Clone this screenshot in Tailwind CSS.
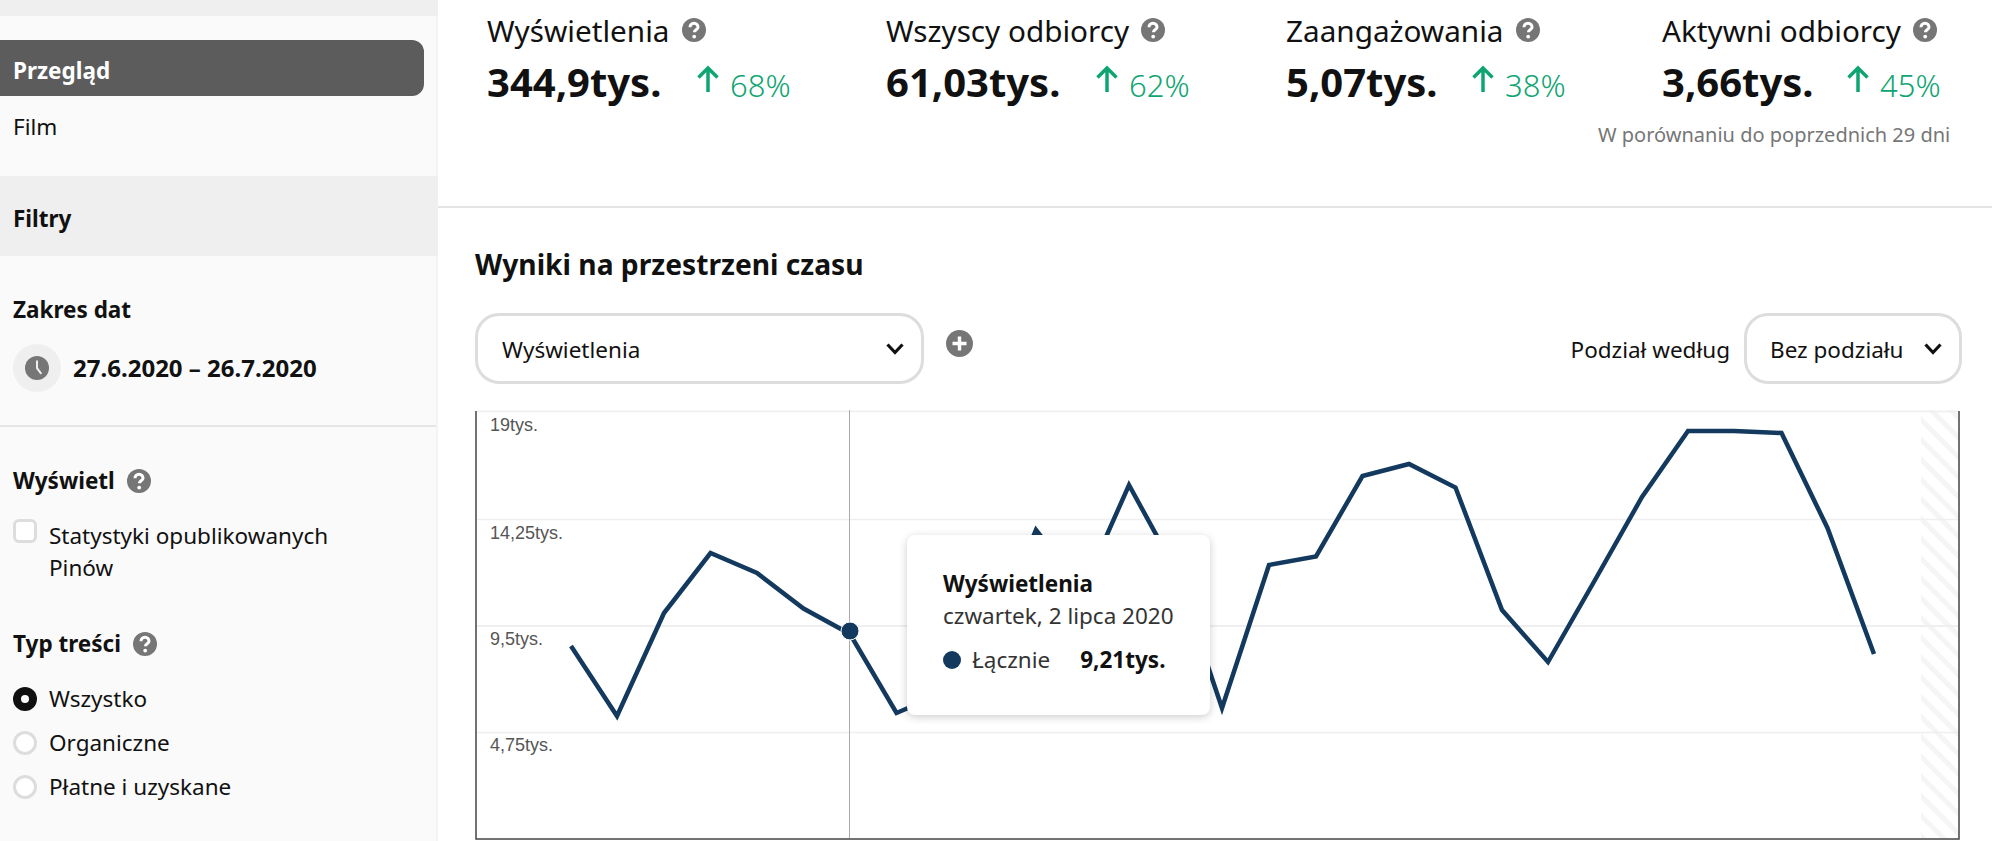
<!DOCTYPE html>
<html lang="pl">
  <head>
    <meta charset="UTF-8" />
    <title>Analityka</title>
    <script src="https://cdn.jsdelivr.net/npm/@tailwindcss/browser@4"></script>
  </head>
  <body class="bg-white text-[#111] font-['Noto_Sans',sans-serif] h-[841px] overflow-hidden">
    <div class="flex h-[841px]">
      <!-- sidebar -->
      <aside class="w-[438px] shrink-0 h-full bg-[#fafafa] border-r-2 border-[#f4f4f4] text-[22.5px]">
        <div class="h-4 bg-[#efefef] -mr-[2px]"></div>
        <div class="mt-6 mr-3 h-14 bg-[#5c5c5c] rounded-r-xl flex items-center pl-[13px] pt-[5px] text-white font-bold">Przegląd</div>
        <div class="h-14 flex items-center pl-[13px] pt-[5px]">Film</div>
        <div class="mt-6 h-20 bg-[#efefef] -mr-[2px] flex items-center pl-[13px] pt-[5px] font-bold">Filtry</div>
        <div class="mt-[36px] h-9 flex items-center pl-[13px] font-bold">Zakres dat</div>
        <div class="mt-[16px] flex items-center pl-[13px] gap-3 font-bold text-[24px]">
          <div class="w-12 h-12 rounded-full bg-[#efefef] flex items-center justify-center">
            <svg width="24" height="24" viewBox="0 0 24 24"><circle cx="12" cy="12" r="12" fill="#767676"/><path d="M11 4.500v8l4.500 6 1.600-1.200-4.100-5.500V4.500z" fill="#efefef"/></svg>
          </div>
          <span>27.6.2020 – 26.7.2020</span>
        </div>
        <div class="mt-[33px] border-t-2 border-[#e6e6e6]"></div>
        <div class="mt-[36px] h-9 flex items-center pl-[13px] gap-3 font-bold">
          Wyświetl
          <svg width="24" height="24" viewBox="0 0 24 24"><circle cx="12" cy="12" r="12" fill="#767676"/><path d="M8 9.200a4 4 0 0 1 8 0c0 2.600-3.600 2.600-3.600 5" fill="none" stroke="#fff" stroke-width="3"/><circle cx="12.200" cy="18.600" r="1.900" fill="#fff"/></svg>
        </div>
        <div class="mt-[20px] flex pl-[13px] gap-3">
          <div class="w-6 h-6 shrink-0 rounded-md border-[3px] border-[#ddd] bg-white"></div>
          <div class="pt-[1px] leading-[32px] w-[320px]">Statystyki opublikowanych Pinów</div>
        </div>
        <div class="mt-[42px] h-9 flex items-center pl-[13px] gap-3 font-bold">
          Typ treści
          <svg width="24" height="24" viewBox="0 0 24 24"><circle cx="12" cy="12" r="12" fill="#767676"/><path d="M8 9.200a4 4 0 0 1 8 0c0 2.600-3.600 2.600-3.600 5" fill="none" stroke="#fff" stroke-width="3"/><circle cx="12.200" cy="18.600" r="1.900" fill="#fff"/></svg>
        </div>
        <div class="mt-[25px] flex flex-col gap-5 pl-[13px]">
          <div class="flex items-center gap-3 h-6">
            <div class="w-6 h-6 rounded-full bg-[#111] flex items-center justify-center"><div class="w-2 h-2 rounded-full bg-white"></div></div>
            <span>Wszystko</span>
          </div>
          <div class="flex items-center gap-3 h-6">
            <div class="w-6 h-6 rounded-full border-[3px] border-[#ddd] bg-white"></div>
            <span>Organiczne</span>
          </div>
          <div class="flex items-center gap-3 h-6">
            <div class="w-6 h-6 rounded-full border-[3px] border-[#ddd] bg-white"></div>
            <span>Płatne i uzyskane</span>
          </div>
        </div>
      </aside>

      <!-- main -->
      <main class="flex-1 min-w-0 relative">
        <div class="h-[208px] pl-[49px] pt-[9px] flex border-b-2 border-[#e4e4e4]">
          <div class="w-[399px]">
            <div class="flex items-center gap-3 text-[29.7px] h-11">Wyświetlenia
              <svg width="24" height="24" viewBox="0 0 24 24" class="-mt-[2px]"><circle cx="12" cy="12" r="12" fill="#767676"/><path d="M8 9.200a4 4 0 0 1 8 0c0 2.600-3.600 2.600-3.600 5" fill="none" stroke="#fff" stroke-width="3"/><circle cx="12.200" cy="18.600" r="1.900" fill="#fff"/></svg>
            </div>
            <div class="flex items-end mt-[4px] h-[50px]">
              <span class="text-[40px] font-bold leading-[50px] w-[209px]">344,9tys.</span>
              <svg width="24" height="28" viewBox="0 0 24 28" class="mb-[14px]"><path d="M12 27V3M2.500 12.500 12 3l9.500 9.500" fill="none" stroke="#0fa573" stroke-width="3.500"/></svg>
              <span class="text-[31px] font-light text-[#0fa573] ml-[10px] leading-[44px]">68%</span>
            </div>
          </div>
          <div class="w-[400px]">
            <div class="flex items-center gap-3 text-[29.7px] h-11">Wszyscy odbiorcy
              <svg width="24" height="24" viewBox="0 0 24 24" class="-mt-[2px]"><circle cx="12" cy="12" r="12" fill="#767676"/><path d="M8 9.200a4 4 0 0 1 8 0c0 2.600-3.600 2.600-3.600 5" fill="none" stroke="#fff" stroke-width="3"/><circle cx="12.200" cy="18.600" r="1.900" fill="#fff"/></svg>
            </div>
            <div class="flex items-end mt-[4px] h-[50px]">
              <span class="text-[40px] font-bold leading-[50px] w-[209px]">61,03tys.</span>
              <svg width="24" height="28" viewBox="0 0 24 28" class="mb-[14px]"><path d="M12 27V3M2.500 12.500 12 3l9.500 9.500" fill="none" stroke="#0fa573" stroke-width="3.500"/></svg>
              <span class="text-[31px] font-light text-[#0fa573] ml-[10px] leading-[44px]">62%</span>
            </div>
          </div>
          <div class="w-[376px]">
            <div class="flex items-center gap-3 text-[29.7px] h-11">Zaangażowania
              <svg width="24" height="24" viewBox="0 0 24 24" class="-mt-[2px]"><circle cx="12" cy="12" r="12" fill="#767676"/><path d="M8 9.200a4 4 0 0 1 8 0c0 2.600-3.600 2.600-3.600 5" fill="none" stroke="#fff" stroke-width="3"/><circle cx="12.200" cy="18.600" r="1.900" fill="#fff"/></svg>
            </div>
            <div class="flex items-end mt-[4px] h-[50px]">
              <span class="text-[40px] font-bold leading-[50px] w-[185px]">5,07tys.</span>
              <svg width="24" height="28" viewBox="0 0 24 28" class="mb-[14px]"><path d="M12 27V3M2.500 12.500 12 3l9.500 9.500" fill="none" stroke="#0fa573" stroke-width="3.500"/></svg>
              <span class="text-[31px] font-light text-[#0fa573] ml-[10px] leading-[44px]">38%</span>
            </div>
          </div>
          <div class="w-[300px]">
            <div class="flex items-center gap-3 text-[29.7px] h-11 whitespace-nowrap">Aktywni odbiorcy
              <svg width="24" height="24" viewBox="0 0 24 24" class="-mt-[2px] shrink-0"><circle cx="12" cy="12" r="12" fill="#767676"/><path d="M8 9.200a4 4 0 0 1 8 0c0 2.600-3.600 2.600-3.600 5" fill="none" stroke="#fff" stroke-width="3"/><circle cx="12.200" cy="18.600" r="1.900" fill="#fff"/></svg>
            </div>
            <div class="flex items-end mt-[4px] h-[50px]">
              <span class="text-[40px] font-bold leading-[50px] w-[184px]">3,66tys.</span>
              <svg width="24" height="28" viewBox="0 0 24 28" class="mb-[14px]"><path d="M12 27V3M2.500 12.500 12 3l9.500 9.500" fill="none" stroke="#0fa573" stroke-width="3.500"/></svg>
              <span class="text-[31px] font-light text-[#0fa573] ml-[10px] leading-[44px]">45%</span>
            </div>
            <div class="mt-[13px] -ml-[64px] text-[20px] text-[#767676] whitespace-nowrap">W porównaniu do poprzednich 29 dni</div>
          </div>
        </div>

        <div class="pl-[37px] pr-[30px]">
          <h2 class="mt-[36px] h-10 flex items-center text-[28.2px] font-bold">Wyniki na przestrzeni czasu</h2>
          <div class="mt-[29px] flex items-center h-[71px]">
            <div class="w-[449px] h-[71px] rounded-[24px] border-[3px] border-[#ddd] flex items-center justify-between pl-[24px] pr-[16px] text-[22.5px]">
              <span class="pt-[2px]">Wyświetlenia</span>
              <svg width="20" height="14" viewBox="0 0 20 14"><path d="M2.500 2.500 10 10.500l7.500-8" fill="none" stroke="#111" stroke-width="3.200"/></svg>
            </div>
            <svg width="27" height="27" viewBox="0 0 27 27" class="ml-[22px] -mt-[10px]"><circle cx="13.500" cy="13.500" r="13.500" fill="#767676"/><path d="M13.500 6.500v14M6.500 13.500h14" stroke="#fff" stroke-width="3.400"/></svg>
            <span class="ml-auto pt-[2px] text-[22.5px]">Podział według</span>
            <div class="ml-[14px] w-[218px] h-[71px] rounded-[24px] border-[3px] border-[#ddd] flex items-center justify-between pl-[23px] pr-[16px] text-[22.5px] whitespace-nowrap">
              <span class="pt-[2px]">Bez podziału</span>
              <svg width="20" height="14" viewBox="0 0 20 14"><path d="M2.500 2.500 10 10.500l7.500-8" fill="none" stroke="#111" stroke-width="3.200"/></svg>
            </div>
          </div>
        </div>

        <!-- chart -->
        <div class="relative mt-[26px] ml-[37px] w-[1486px] h-[431px]">
          <svg width="1486" height="431" viewBox="475 410 1486 431" class="block">
            <defs>
              <pattern id="hatch" width="14" height="14" patternUnits="userSpaceOnUse" patternTransform="rotate(45)">
                <rect x="0" y="0" width="14" height="5" fill="#f5f5f5"/>
              </pattern>
            </defs>
            <rect x="1921" y="410" width="38" height="428" fill="url(#hatch)"/>
            <g stroke="#efefef" fill="none">
              <path d="M477 411.500H1958" stroke-width="1.500"/>
              <path d="M477 519.500H1958" stroke-width="1.500"/>
              <path d="M477 626H1958" stroke-width="2"/>
              <path d="M477 732.500H1958" stroke-width="1.500"/>
            </g>
            <path d="M849.500 410V838" stroke="#aaa" stroke-width="1"/>
            <path d="M476 411V839H1959V411" fill="none" stroke="#444" stroke-width="1.500"/>
            <g font-family="Liberation Sans" font-size="18" fill="#555">
              <text x="490" y="431">19tys.</text>
              <text x="490" y="539">14,25tys.</text>
              <text x="490" y="645">9,5tys.</text>
              <text x="490" y="751">4,75tys.</text>
            </g>
            <polyline fill="none" stroke="#133a5e" stroke-width="4.500" points="571,646 617,716 664,613 710.500,553 757,573 803.500,608.500 850,634 896.500,713 943,693 989.500,640 1036,530 1082.500,590 1129,485 1175.500,570 1222,708 1269,565 1316,556.500 1362.500,476 1409,464 1455.500,487.500 1502,610 1548,662 1595,580 1642,497 1688,431 1734,431 1781.500,433 1827.500,528 1874,654"/>
            <circle cx="850" cy="631" r="9" fill="#133a5e" stroke="#fff" stroke-width="1"/>
          </svg>
          <!-- tooltip -->
          <div class="absolute left-[432px] top-[125px] w-[303px] h-[180px] bg-white rounded-lg shadow-[0_2px_8px_rgba(0,0,0,0.2)] pl-9 pt-[33px] text-[22.5px]">
            <div class="font-bold leading-[32px]">Wyświetlenia</div>
            <div class="leading-[32px] text-[#333] whitespace-nowrap">czwartek, 2 lipca 2020</div>
            <div class="mt-[11px] flex items-center whitespace-nowrap">
              <span class="w-[18px] h-[18px] rounded-full bg-[#133a5e]"></span>
              <span class="ml-[11px] text-[#333]">Łącznie</span>
              <span class="ml-[30px] font-bold">9,21tys.</span>
            </div>
          </div>
        </div>
      </main>
    </div>
  </body>
</html>
